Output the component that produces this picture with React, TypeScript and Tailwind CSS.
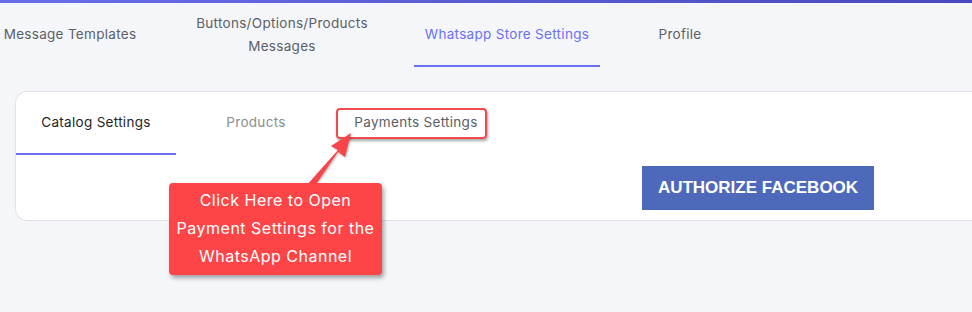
import React from "react";

export default function App() {
  const font = { fontFamily: "Inter, 'Noto Sans', sans-serif" };
  return (
    <div className="relative w-[972px] h-[312px] overflow-hidden bg-[#f5f6fa]" style={font}>
      <div className="h-[3px] bg-gradient-to-r from-[#6a6ee9] to-[#4a48be]" />
      <div className="flex h-[64px] text-[13.5px] tracking-[0.3px] text-[#5b5f66]">
        <div className="w-[140px] flex items-center justify-center pb-[2px]">Message Templates</div>
        <div className="ml-[50px] w-[184px] flex items-center justify-center text-center leading-[23px]">
          Buttons/Options/Products
          <br />
          Messages
        </div>
        <div className="ml-[40px] w-[186px] flex items-center justify-center border-b-2 border-[#6c6ff6] text-[#6c6ff6]">
          Whatsapp Store Settings
        </div>
        <div className="ml-[40px] w-[80px] flex items-center justify-center pb-[2px]">Profile</div>
      </div>
      <div className="ml-[15px] mt-[24px] w-[990px] h-[130px] rounded-[12px] border border-[#e2e2e6] bg-white">
        <div className="flex h-[63px] text-[13.5px] tracking-[0.3px]">
          <div className="w-[160px] flex items-center justify-center border-b-2 border-[#6c6ff6] text-[#1f2329]">
            Catalog Settings
          </div>
          <div className="w-[160px] flex items-center justify-center pb-[2px] text-[#8a8e94]">Products</div>
          <div className="w-[160px] flex items-center justify-center pb-[2px] text-[#5a5e66]">Payments Settings</div>
        </div>
        <div className="pl-[626px] pt-[11px]">
          <div
            className="w-[232px] h-[44px] flex items-center justify-center bg-[#4e69b9] text-white text-[17px] font-bold"
            style={{ fontFamily: "'Liberation Sans', Arial, sans-serif" }}
          >
            AUTHORIZE FACEBOOK
          </div>
        </div>
      </div>

      {/* highlight box */}
      <div className="absolute left-[336px] top-[108px] w-[151px] h-[31px] rounded-[4px] border-2 border-[#f04a4c] shadow-[1px_2px_3px_rgba(0,0,0,0.35)]" />

      {/* arrow */}
      <svg className="absolute left-0 top-0" width="972" height="312" viewBox="0 0 972 312">
        <g style={{ filter: "drop-shadow(1px 1px 1px rgba(0,0,0,0.3))" }}>
          <polygon points="306,186 312,190 338,152 345,157 351,133 331,146 338,150 " fill="#f8454a" />
        </g>
      </svg>

      {/* callout */}
      <div className="absolute left-[169px] top-[183px] w-[213px] h-[92px] pb-[2px] rounded-[4px] bg-[#fd4547] shadow-[2px_3px_4px_rgba(0,0,0,0.35)] flex flex-col items-center justify-center text-white text-[16px] tracking-[0.5px] leading-[28px] text-center">
        <div>Click Here to Open</div>
        <div>Payment Settings for the</div>
        <div>WhatsApp Channel</div>
      </div>
    </div>
  );
}
